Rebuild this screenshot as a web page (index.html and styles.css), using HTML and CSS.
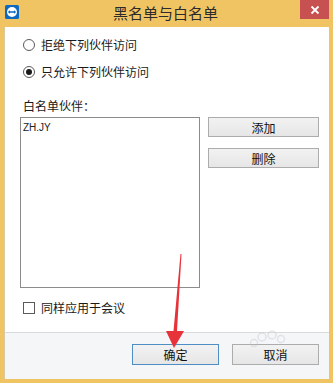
FILE: index.html
```html
<!DOCTYPE html>
<html lang="zh">
<head>
<meta charset="utf-8">
<link rel="stylesheet" href="styles.css">
</head>
<body>
<div class="window">
  <div class="titlebar">
    <svg class="app-icon" width="14" height="14" viewBox="0 0 14 14">
      <rect width="14" height="14" rx="1.5" fill="#0e6ac1"/>
      <circle cx="7" cy="7" r="5" fill="#fff"/>
      <path d="M2.8 7 L5 5.2 L5 6.3 L9 6.3 L9 5.2 L11.2 7 L9 8.8 L9 7.7 L5 7.7 L5 8.8 Z" fill="#0e6ac1"/>
    </svg>
    <div class="title">黑名单与白名单</div>
    <div class="close">
      <svg width="10" height="10" viewBox="0 0 10 10"><path d="M1.5 1.5 L8.5 8.5 M8.5 1.5 L1.5 8.5" stroke="#fff" stroke-width="1.8"/></svg>
    </div>
  </div>
  <div class="client">
    <div class="content">
      <label class="option"><span class="radio"></span>拒绝下列伙伴访问</label>
      <label class="option second"><span class="radio checked"></span>只允许下列伙伴访问</label>
      <div class="list-label">白名单伙伴：</div>
      <div class="list-row">
        <div class="listbox"><div class="list-item">ZH.JY</div></div>
        <div class="side-buttons">
          <div class="btn wide">添加</div>
          <div class="btn wide">删除</div>
        </div>
      </div>
      <label class="option check-row"><span class="checkbox"></span>同样应用于会议</label>
    </div>
    <div class="footer">
      <div class="btn dialog default">确定</div>
      <div class="btn dialog">取消</div>
    </div>
  </div>
  <svg class="arrow" width="333" height="383" viewBox="0 0 333 383">
    <g fill="none" stroke="rgba(190,190,200,0.35)" stroke-width="1.5">
      <circle cx="262" cy="337" r="4"/>
      <circle cx="272" cy="335" r="4"/>
      <circle cx="281" cy="339" r="3.5"/>
      <circle cx="254" cy="343" r="3.5"/>
    </g>
    <path d="M180.5 254 L181.5 254 L177 331 L184 331 L174 348 L166 331 L173.5 331 Z" fill="#e8323a"/>
  </svg>
</div>
</body>
</html>
```
FILE: styles.css
```css
* { box-sizing: border-box; }
html, body { margin: 0; padding: 0; }
body {
  width: 333px;
  height: 383px;
  overflow: hidden;
  font-family: "Noto Sans CJK SC", "Noto Sans", sans-serif;
  font-size: 12px;
  color: #1a1a1a;
}
.window {
  position: relative;
  width: 333px;
  height: 383px;
  background: #f1c463;
  display: flex;
  flex-direction: column;
  padding: 0 4px 4px 4px;
}
.titlebar {
  height: 27px;
  flex: none;
  display: flex;
  align-items: flex-start;
  position: relative;
}
.app-icon { margin: 5px 0 0 1px; }
.title {
  flex: 1;
  text-align: center;
  font-size: 15px;
  line-height: 26px;
  color: #2b2b2b;
  padding-left: 12px;
}
.close {
  width: 29px;
  height: 19px;
  background: #c75050;
  display: flex;
  align-items: center;
  justify-content: center;
}
.client {
  flex: 1;
  display: flex;
  flex-direction: column;
  background: #fff;
  border-left: 1px solid #d9c9a0;
}
.content {
  height: 305px;
  flex: none;
  padding: 11px 10px 0 15px;
  display: flex;
  flex-direction: column;
}
.option {
  display: flex;
  align-items: center;
  height: 14px;
  line-height: 14px;
  margin-left: 3px;
  white-space: nowrap;
}
.option.second { margin-top: 13px; }
.radio {
  width: 12px;
  height: 12px;
  border-radius: 50%;
  border: 1px solid #5a5a5a;
  background: #fff;
  margin-right: 6px;
  display: flex;
  align-items: center;
  justify-content: center;
}
.radio.checked::after {
  content: "";
  width: 6px;
  height: 6px;
  border-radius: 50%;
  background: #1a1a1a;
}
.list-label {
  margin: 20px 0 0 3px;
  height: 14px;
  line-height: 14px;
}
.list-row {
  margin-top: 4px;
  display: flex;
  gap: 8px;
}
.listbox {
  width: 180px;
  height: 171px;
  border: 1px solid #8c8c8c;
  padding: 3px 0 0 2px;
}
.list-item {
  font-family: "Liberation Sans", Arial, sans-serif;
  font-size: 10px;
  line-height: 13px;
  color: #222;
}
.side-buttons {
  display: flex;
  flex-direction: column;
  gap: 11px;
}
.btn {
  display: flex;
  align-items: center;
  justify-content: center;
  border: 1px solid #acacac;
  background: linear-gradient(#f2f2f2, #e6e6e6);
  color: #111;
  font-size: 12px;
}
.btn.wide { width: 111px; height: 20px; }
.check-row { margin-top: 13px; }
.checkbox {
  width: 12px;
  height: 12px;
  border: 1px solid #5a5a5a;
  background: #fff;
  margin-right: 6px;
}
.footer {
  flex: 1;
  background: #f5f6f7;
  border-top: 1px solid #dadada;
  display: flex;
  justify-content: flex-end;
  align-items: flex-start;
  padding: 11px 10px 0 0;
  gap: 13px;
}
.btn.dialog { width: 87px; height: 21px; }
.btn.default { border-color: #4f8ec4; }
.arrow {
  position: absolute;
  left: 0;
  top: 0;
  pointer-events: none;
}
```
